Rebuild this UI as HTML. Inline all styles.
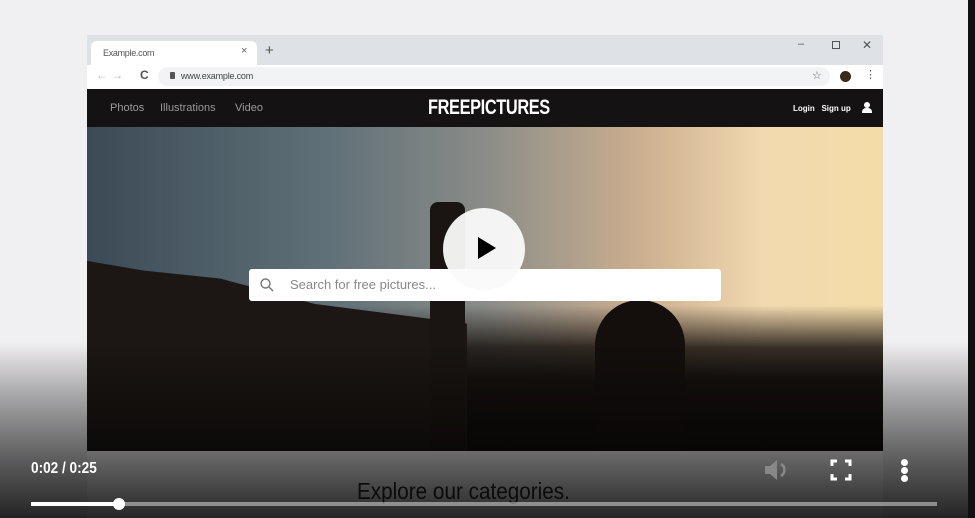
<!DOCTYPE html>
<html><head><meta charset="utf-8"><style>
*{margin:0;padding:0;box-sizing:border-box}
body{width:975px;height:518px;overflow:hidden;background:#f0eff1;font-family:"Liberation Sans",sans-serif;position:relative}
.abs{position:absolute}
</style></head><body>
<div class="abs" style="left:968px;top:0;width:7px;height:518px;background:#111"></div>
<!-- browser -->
<div class="abs" style="left:87px;top:35px;width:796px;height:30px;background:#dee1e6"></div>
<div class="abs" style="left:91px;top:41px;width:166px;height:24px;background:#fff;border-radius:6px 6px 0 0"></div>
<div class="abs" style="left:103px;top:48px;font-size:9px;color:#555;letter-spacing:-0.3px">Example.com</div>
<div class="abs" style="left:241px;top:45px;font-size:11px;color:#666">×</div>
<div class="abs" style="left:265px;top:42px;font-size:15px;color:#555">+</div>
<div class="abs" style="left:798px;top:38px;font-size:11px;color:#555">–</div>
<div class="abs" style="left:832px;top:41px;width:8px;height:8px;border:1px solid #555"></div>
<div class="abs" style="left:862px;top:38px;font-size:12px;color:#555">✕</div>
<div class="abs" style="left:87px;top:65px;width:796px;height:24px;background:#fff"></div>
<div class="abs" style="left:96px;top:68px;font-size:12px;color:#bbb">← →</div>
<div class="abs" style="left:140px;top:68px;font-size:12px;color:#555;font-weight:bold">C</div>
<div class="abs" style="left:158px;top:67px;width:672px;height:19px;background:#f1f3f4;border-radius:10px"></div>
<div class="abs" style="left:170px;top:72px;width:5px;height:7px;background:#555;border-radius:1px"></div>
<div class="abs" style="left:181px;top:71px;font-size:9px;color:#444;letter-spacing:-0.2px">www.example.com</div>
<div class="abs" style="left:812px;top:69px;font-size:11px;color:#666">☆</div>
<div class="abs" style="left:840px;top:71px;width:11px;height:11px;border-radius:50%;background:#3a2a1a"></div>
<div class="abs" style="left:865px;top:68px;font-size:11px;color:#555">⋮</div>
<!-- nav -->
<div class="abs" style="left:87px;top:89px;width:796px;height:38px;background:#141212"></div>
<div class="abs" style="left:110px;top:102px;font-size:11px;color:#9a9a9a">Photos</div>
<div class="abs" style="left:160px;top:102px;font-size:11px;color:#9a9a9a">Illustrations</div>
<div class="abs" style="left:235px;top:102px;font-size:11px;color:#9a9a9a">Video</div>
<div class="abs" style="left:428px;top:96px;font-size:21px;color:#fff;font-weight:bold;letter-spacing:-0.5px;transform:scaleX(0.78);transform-origin:left">FREEPICTURES</div>
<div class="abs" style="left:793px;top:104px;font-size:8px;color:#fff;font-weight:bold">Login &nbsp;&nbsp;Sign up</div>
<div class="abs" style="left:864px;top:102px;width:6px;height:6px;border-radius:50%;background:#fff"></div>
<div class="abs" style="left:862px;top:108px;width:10px;height:5px;border-radius:4px 4px 0 0;background:#fff"></div>
<!-- hero -->
<div class="abs" style="left:87px;top:127px;width:796px;height:324px;background:linear-gradient(90deg,#3c4a55 0%,#5f7078 30%,#8a8c88 50%,#cdb090 70%,#f2d9b0 85%,#f4dca8 100%)"></div>
<div class="abs" style="left:87px;top:127px;width:796px;height:324px;background:linear-gradient(180deg,rgba(0,0,0,0) 55%,rgba(25,20,16,.85) 68%,#15110e 78%,#120e0c 100%)"></div>
<div class="abs" style="left:87px;top:255px;width:380px;height:196px;background:#1c1714;clip-path:polygon(0 3%,15% 8%,35% 12%,60% 25%,100% 35%,100% 100%,0 100%)"></div>
<div class="abs" style="left:430px;top:202px;width:35px;height:249px;background:#1a1512;border-radius:8px 8px 0 0"></div>
<div class="abs" style="left:595px;top:300px;width:90px;height:151px;background:#140f0d;border-radius:45px 45px 0 0"></div>
<div class="abs" style="left:249px;top:269px;width:472px;height:32px;background:#fff;border-radius:3px"></div>
<svg class="abs" style="left:259px;top:277px" width="16" height="16" viewBox="0 0 16 16"><circle cx="6.5" cy="6.5" r="4.5" stroke="#777" stroke-width="1.4" fill="none"/><path d="M10 10l4 4" stroke="#777" stroke-width="1.4"/></svg>
<div class="abs" style="left:290px;top:277px;font-size:13px;color:#888">Search for free pictures...</div>
<div class="abs" style="left:443px;top:208px;width:82px;height:82px;border-radius:50%;background:rgba(250,250,250,.95)"></div>
<div class="abs" style="left:478px;top:237px;width:0;height:0;border-left:18px solid #000;border-top:11px solid transparent;border-bottom:11px solid transparent"></div>
<div class="abs" style="left:87px;top:451px;width:796px;height:67px;background:#fff"></div>
<div class="abs" style="left:357px;top:478px;font-size:23px;color:#2a2a2a;transform:scaleX(0.9);transform-origin:left">Explore our categories.</div>
<!-- video overlay -->
<div class="abs" style="left:0;top:342px;width:968px;height:176px;background:linear-gradient(180deg,rgba(0,0,0,0) 0%,rgba(0,0,0,.3) 30%,rgba(0,0,0,.6) 65%,rgba(0,0,0,.85) 100%)"></div>
<div class="abs" style="left:31px;top:460px;font-size:16px;color:#fff;font-weight:bold;transform:scaleX(0.85);transform-origin:left">0:02 / 0:25</div>
<svg class="abs" style="left:762px;top:456px" width="30" height="28" viewBox="0 0 30 28"><path d="M3 10h5l7-6v20l-7-6H3z" fill="#888"/><path d="M19 8a7 7 0 0 1 0 12" stroke="#888" stroke-width="2.5" fill="none"/></svg>
<svg class="abs" style="left:830px;top:459px" width="22" height="22" viewBox="0 0 22 22"><path d="M2 7V2h5M15 2h5v5M20 15v5h-5M7 20H2v-5" stroke="#fff" stroke-width="3" fill="none"/></svg>
<div class="abs" style="left:901px;top:459px;width:7px;height:7px;border-radius:50%;background:#fff"></div>
<div class="abs" style="left:901px;top:467px;width:7px;height:7px;border-radius:50%;background:#fff"></div>
<div class="abs" style="left:901px;top:475px;width:7px;height:7px;border-radius:50%;background:#fff"></div>
<div class="abs" style="left:31px;top:502px;width:906px;height:4px;background:rgba(255,255,255,.45)"></div>
<div class="abs" style="left:31px;top:502px;width:88px;height:4px;background:#fff"></div>
<div class="abs" style="left:113px;top:498px;width:12px;height:12px;border-radius:50%;background:#fff"></div>
</body></html>
